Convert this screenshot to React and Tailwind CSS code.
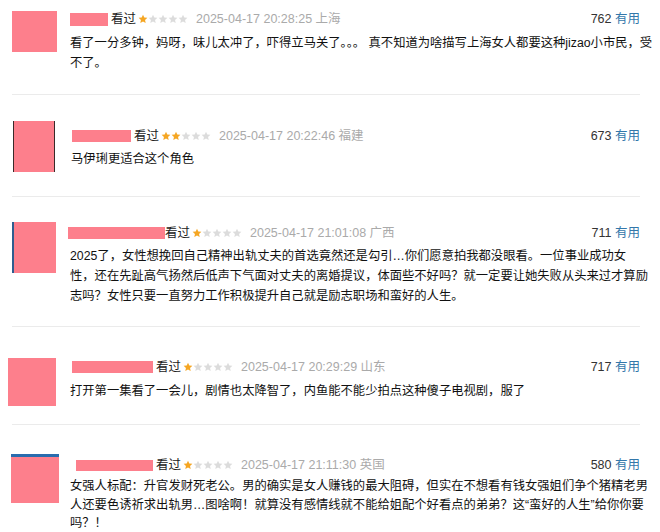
import React from "react";

const FONT = { fontFamily: '"Liberation Sans", Arial, "Noto Sans CJK SC", sans-serif' };

function Star({ on }) {
  return (
    <svg width="10" height="10" viewBox="0 0 24 24" className="block">
      <polygon
        points="12,1.5 15.1,8.3 22.5,9.1 16.9,14.1 18.5,21.5 12,17.7 5.5,21.5 7.1,14.1 1.5,9.1 8.9,8.3"
        fill={on ? "#f5a623" : "#dcdcdc"}
      />
    </svg>
  );
}

const items = [
  {
    wrap: "pt-[9px] pb-[21px]",
    avatar: "w-[45px] h-[41px] mt-[2px] bg-[#fd7f8c]",
    avatarWrap: "",
    name: "w-[38px] h-[13px] ml-[0px]",
    stars: 1,
    date: "2025-04-17 20:28:25 上海",
    count: "762",
    text: "mt-[4px] leading-[20px]",
    lines: [
      "看了一分多钟，妈呀，味儿太冲了，吓得立马关了。。。 真不知道为啥描写上海女人都要这种jizao小市民，受",
      "不了。",
    ],
  },
  {
    wrap: "pt-[31px] pb-[24px]",
    avatar: "w-[42px] h-[51px] -mt-[5px] bg-[#fd7f8c] border-x border-[#3a2a2a]",
    avatarWrap: "ml-[1px]",
    name: "w-[59px] h-[12px] ml-[1px]",
    stars: 2,
    date: "2025-04-17 20:22:46 福建",
    count: "673",
    text: "mt-[3px] leading-[20px]",
    lines: ["马伊琍更适合这个角色"],
  },
  {
    wrap: "pt-[26px] pb-[20px]",
    avatar: "w-[44px] h-[51px] -mt-[1px] bg-[#fd7f8c] border-l-[2px] border-[#2f5d8f]",
    avatarWrap: "",
    name: "w-[97px] h-[12px] -ml-[2px] mr-[-3px]",
    stars: 1,
    date: "2025-04-17 21:01:08 广西",
    count: "711",
    text: "mt-[3px] leading-[20px]",
    lines: [
      "2025了，女性想挽回自己精神出轨丈夫的首选竟然还是勾引…你们愿意拍我都没眼看。一位事业成功女",
      "性，还在先趾高气扬然后低声下气面对丈夫的离婚提议，体面些不好吗？就一定要让她失败从头来过才算励",
      "志吗？女性只要一直努力工作积极提升自己就是励志职场和蛮好的人生。",
    ],
  },
  {
    wrap: "pt-[30px] pb-[18px]",
    avatar: "w-[48px] h-[48px] mt-[1px] -ml-[4px] bg-[#fd7f8c]",
    avatarWrap: "",
    name: "w-[81px] h-[12px] ml-[2px]",
    stars: 1,
    date: "2025-04-17 20:29:29 山东",
    count: "717",
    text: "mt-[4px] leading-[20px]",
    lines: ["打开第一集看了一会儿，剧情也太降智了，内鱼能不能少拍点这种傻子电视剧，服了"],
  },
  {
    wrap: "pt-[30px] pb-[2px]",
    avatar: "w-[48px] h-[49px] -mt-[1px] -ml-[1px] bg-[#fd7f8c] border-t-[3px] border-[#2a6cae]",
    avatarWrap: "",
    name: "w-[77px] h-[11px] ml-[6px]",
    stars: 1,
    date: "2025-04-17 21:11:30 英国",
    count: "580",
    text: "mt-[2px] leading-[18.5px]",
    lines: [
      "女强人标配：升官发财死老公。男的确实是女人赚钱的最大阻碍，但实在不想看有钱女强姐们争个猪精老男",
      "人还要色诱祈求出轨男…图啥啊！就算没有感情线就不能给姐配个好看点的弟弟？这“蛮好的人生”给你你要",
      "吗？！",
    ],
  },
];

export default function App() {
  return (
    <div className="w-[660px] h-[532px] overflow-hidden bg-white" style={FONT}>
      <div className="ml-[12px] w-[628px]">
        {items.map((it, i) => (
          <div
            key={i}
            className={`flex ${it.wrap} ${i < items.length - 1 ? "border-b border-[#ebebeb]" : ""}`}
          >
            <div className={`w-[58px] shrink-0 ${it.avatarWrap}`}>
              <div className={it.avatar} />
            </div>
            <div className="flex-1 min-w-0">
              <div className="flex items-center h-[20px] text-[12.5px]">
                <div className={`${it.name} bg-[#fd7f8c]`} />
                <span className="ml-[3px] text-[#222]">看过</span>
                <span className="ml-[2px] flex">
                  {[0, 1, 2, 3, 4].map((s) => (
                    <Star key={s} on={s < it.stars} />
                  ))}
                </span>
                <span className="ml-[8px] text-[#aaaaaa]">{it.date}</span>
                <span className="ml-auto text-[#333]">
                  {it.count} <span className="text-[#3377aa]">有用</span>
                </span>
              </div>
              <div className={`${it.text} text-[12.3px] text-[#111]`}>
                {it.lines.map((l, j) => (
                  <div key={j} className="whitespace-nowrap">
                    {l}
                  </div>
                ))}
              </div>
            </div>
          </div>
        ))}
      </div>
    </div>
  );
}
